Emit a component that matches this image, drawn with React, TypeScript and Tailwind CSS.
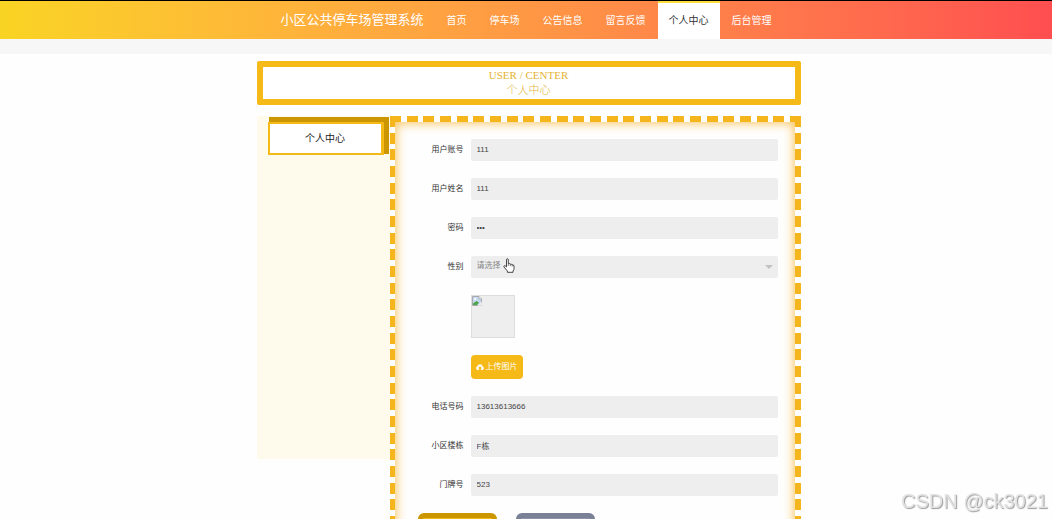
import { ReactNode } from 'react';
import { clsx } from 'clsx';

const navItems = ['首页', '停车场', '公告信息', '留言反馈', '个人中心', '后台管理'];

const fieldClass =
  'block h-[22px] w-full appearance-none rounded-[2px] bg-[#eeeeee] px-1.5 pb-0.5 text-[8px] outline-none';

const Header = () => (
  <header className="border-t border-black bg-linear-to-r from-[#f9d423] to-[#ff4e50]">
    <nav className="flex h-[38px] items-stretch justify-center pl-[11px] text-[10px] text-white">
      <h1 className="mr-3 flex items-center text-[13px] whitespace-nowrap">小区公共停车场管理系统</h1>
      <ul className="flex gap-px">
        {navItems.map((item) => (
          <li key={item} className="flex">
            <a
              href="#"
              className={clsx(
                'flex items-center border-t-2 px-[11px] pb-0.5 whitespace-nowrap',
                item === '个人中心'
                  ? 'border-[#fbe03c] bg-white text-[#333333]'
                  : 'border-transparent',
              )}
            >
              {item}
            </a>
          </li>
        ))}
      </ul>
    </nav>
  </header>
);

const Banner = () => (
  <div className="rounded-[2px] border-[6px] border-[#f5b918] bg-white text-center text-[11px] leading-[15px] text-[#e5b334]">
    <div className="flex h-8 flex-col justify-center font-['Liberation_Serif','Noto_Sans_CJK_SC',serif] font-light">
      <p>USER / CENTER</p>
      <p>个人中心</p>
    </div>
  </div>
);

const Sidebar = () => (
  <aside className="h-[343px] w-[133px] shrink-0 bg-[#fffbec] pt-1.5 pr-1.5 pl-[11px]">
    <a
      href="#"
      className="flex h-[33px] items-center justify-center border-2 border-r-3 border-[#f5b918] bg-white text-[10px] text-[#222222] shadow-[3px_-3px_0_2px_#cc9600]"
    >
      个人中心
    </a>
  </aside>
);

type DashedPanelProps = {
  children: ReactNode;
};

// three dashes per 50px tile, on the top, left and right edges
const DashedPanel = ({ children }: DashedPanelProps) => (
  <div className="min-w-0 flex-1 bg-white [background-image:linear-gradient(to_right,#f5b51c_11px,transparent_11px_17px,#f5b51c_17px_28px,transparent_28px_33px,#f5b51c_33px_44px,transparent_44px),linear-gradient(#f5b51c_11px,transparent_11px_17px,#f5b51c_17px_28px,transparent_28px_33px,#f5b51c_33px_44px,transparent_44px),linear-gradient(#f5b51c_11px,transparent_11px_17px,#f5b51c_17px_28px,transparent_28px_33px,#f5b51c_33px_44px,transparent_44px)] [background-position:left_top,left_top,right_top] [background-repeat:repeat-x,repeat-y,repeat-y] [background-size:50px_6px,5px_50px,6px_50px] pt-1.5 pr-1.5 pl-[5px]">
    <div className="bg-[#fefefe] pt-[17px] pr-[17px] pb-6 pl-[23px] shadow-[inset_0_0_12px_#f9b93c]">
      {children}
    </div>
  </div>
);

type RowProps = {
  id?: string;
  label?: string;
  children: ReactNode;
};

const Row = ({ id, label, children }: RowProps) => (
  <div className="flex items-center">
    <div className="mr-[7px] w-[46px] shrink-0 text-right text-[8px] whitespace-nowrap text-[#333333]">
      {label && <label htmlFor={id}>{label}</label>}
    </div>
    <div className="relative min-w-0 flex-1">{children}</div>
  </div>
);

type TextRowProps = {
  id: string;
  label: string;
  value: string;
  type?: string;
};

const TextRow = ({ id, label, value, type = 'text' }: TextRowProps) => (
  <Row id={id} label={label}>
    <input
      id={id}
      name={id}
      type={type}
      defaultValue={value}
      className={clsx(fieldClass, 'text-[#444444]')}
    />
  </Row>
);

const BrokenImage = () => (
  <svg viewBox="0 0 10 10" className="size-2.5" aria-hidden="true">
    <path d="M.5 .5H7L9.500 3V9.500H.5Z" fill="#c6d8f2" stroke="#9a9a9a" strokeWidth=".8" />
    <path d="M7 .5V3H9.500" fill="#fff" stroke="#9a9a9a" strokeWidth=".7" />
    <circle cx="3.200" cy="3" r="1.100" fill="#fff" />
    <path d="M1 9V7.500L4.500 5L7 6.500L5 9Z" fill="#4ea548" />
    <path d="M5.500 9.800L9.800 5.500V9.800Z" fill="#eee" />
  </svg>
);

const CloudUpload = () => (
  <svg viewBox="0 0 16 12" className="h-1.5 w-2" fill="currentColor" aria-hidden="true">
    <path d="M3.500 12A3.500 3.500 0 0 1 2.500 5.200A5.500 5.500 0 0 1 13.300 4.800A3.700 3.700 0 0 1 12.500 12H10V8.500H12L8 4.500L4 8.500H6V12Z" />
  </svg>
);

const HandPointer = () => (
  <svg
    viewBox="0 0 12 15"
    className="pointer-events-none absolute top-0.5 left-8 h-[15px] w-3"
    aria-hidden="true"
  >
    <path
      d="M3.500 9V1.800Q3.500 .7 4.400 .7T5.300 1.800V5.700Q6.900 5 7.200 6.200Q8.700 5.600 9 6.900Q10.900 6.400 11 8V10.500Q11 12 10 13V14.300H4.400V13L1 9Q.5 8 1.300 7.600Q2 7.300 3.500 9Z"
      fill="#fff"
      stroke="#333"
      strokeWidth=".9"
      strokeLinejoin="round"
    />
    <path d="M5.300 5.700V8M7.200 6.200V8.200M9.100 6.900V8.500" stroke="#333" strokeWidth=".6" />
  </svg>
);

const UserForm = () => (
  <form className="flex flex-col gap-[17px]" onSubmit={(e) => e.preventDefault()}>
    <TextRow id="account" label="用户账号" value="111" />
    <TextRow id="name" label="用户姓名" value="111" />
    <TextRow id="password" label="密码" value="111" type="password" />
    <Row id="gender" label="性别">
      <select id="gender" name="gender" className={clsx(fieldClass, 'text-[#888888]')}>
        <option>请选择</option>
        <option>男</option>
        <option>女</option>
      </select>
      <span className="pointer-events-none absolute top-[9px] right-[5px] border-x-4 border-t-4 border-x-transparent border-t-[#c2c2c2]" />
      <HandPointer />
    </Row>
    <Row>
      <div className="h-[43px] w-11 border border-[#dddddd] bg-[#eeeeee]">
        <BrokenImage />
      </div>
    </Row>
    <Row>
      <button
        type="button"
        className="flex h-6 w-[52px] items-center justify-center gap-0.5 rounded-[4px] bg-[#f5b918] text-[8px] whitespace-nowrap text-white"
      >
        <CloudUpload />
        上传图片
      </button>
    </Row>
    <TextRow id="phone" label="电话号码" value="13613613666" />
    <TextRow id="building" label="小区楼栋" value="F栋" />
    <TextRow id="door" label="门牌号" value="523" />
    <div className="flex gap-[19px]">
      <button
        type="submit"
        aria-label="更新信息"
        className="h-8 w-[79px] rounded-[6px] border-[5px] border-[#cc9600] bg-[#f5b918]"
      />
      <button
        type="button"
        aria-label="退出登录"
        className="h-8 w-[79px] rounded-[6px] border-[5px] border-[#7a8095] bg-[#8f95a9]"
      />
    </div>
  </form>
);

export default function App() {
  return (
    <div className="h-screen overflow-hidden bg-[#fefefe] font-['Liberation_Sans','Noto_Sans_CJK_SC',sans-serif]">
      <Header />
      <div className="h-[15px] bg-[#f7f7f7]" />
      <div className="pt-[7px] pl-[5px]">
        <main className="mx-auto max-w-[544px]">
          <Banner />
          <div className="mt-[11px] flex items-start">
            <Sidebar />
            <DashedPanel>
              <UserForm />
            </DashedPanel>
          </div>
        </main>
      </div>
      <p className="fixed right-1 bottom-1.5 text-[20px] leading-6 text-[#e2e2e2] [text-shadow:1px_1px_1px_#999999]">
        CSDN @ck3021
      </p>
    </div>
  );
}
